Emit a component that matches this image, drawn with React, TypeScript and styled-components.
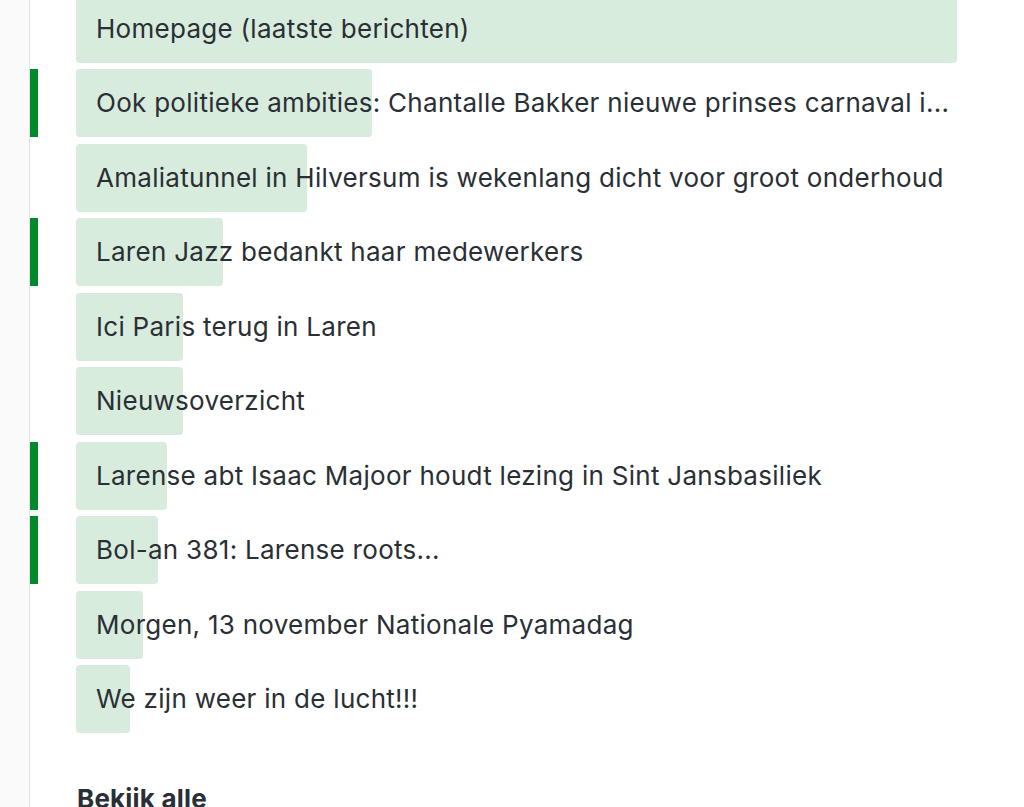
import React from "react";
import styled, { createGlobalStyle } from "styled-components";

const GlobalStyle = createGlobalStyle`
  html, body {
    margin: 0;
    padding: 0;
    background: #ffffff;
    font-family: Inter, "Noto Sans", "Liberation Sans", sans-serif;
    color: #2a2f35;
    overflow: hidden;
  }
`;

const Page = styled.div`
  display: flex;
  min-height: 807px;
`;

const Sidebar = styled.aside`
  width: 29px;
  flex: none;
  background: #fafafa;
  border-right: 1px solid #e2e2e2;
`;

const Main = styled.main`
  flex: 1;
  margin-top: -5px;
`;

const List = styled.ul`
  list-style: none;
  margin: 0;
  padding: 0;
  display: flex;
  flex-direction: column;
  gap: 6.45px;
`;

const Row = styled.li`
  display: grid;
  grid-template-columns: 8px 881px;
  column-gap: 38px;
  height: 68px;
`;

const Marker = styled.span<{ $on: boolean }>`
  background: ${(p) => (p.$on ? "#008a2a" : "transparent")};
`;

const Item = styled.a`
  position: relative;
  display: flex;
  align-items: center;
  padding: 0 2px 0 20px;
  text-decoration: none;
  color: inherit;
  min-width: 0;
`;

const Fill = styled.span`
  position: absolute;
  left: 0;
  top: 0;
  bottom: 0;
  background: #d8ecdd;
  border-radius: 4px;
`;

const Title = styled.span`
  position: relative;
  font-size: 26px;
  line-height: 32px;
  letter-spacing: 0.28px;
  white-space: nowrap;
  overflow: hidden;
  text-overflow: ellipsis;
`;

const More = styled.a`
  display: block;
  margin: 50px 0 0 47px;
  font-size: 26px;
  line-height: 32px;
  letter-spacing: 0.2px;
  font-weight: 700;
  color: #2a2f35;
  text-decoration: none;
`;

const items = [
  { title: "Homepage (laatste berichten)", width: 881, marked: false },
  {
    title: "Ook politieke ambities: Chantalle Bakker nieuwe prinses carnaval i...",
    width: 296,
    marked: true,
  },
  { title: "Amaliatunnel in Hilversum is wekenlang dicht voor groot onderhoud", width: 231, marked: false },
  { title: "Laren Jazz bedankt haar medewerkers", width: 147, marked: true },
  { title: "Ici Paris terug in Laren", width: 107, marked: false },
  { title: "Nieuwsoverzicht", width: 107, marked: false },
  { title: "Larense abt Isaac Majoor houdt lezing in Sint Jansbasiliek", width: 91, marked: true },
  { title: "Bol-an 381: Larense roots...", width: 82, marked: true },
  { title: "Morgen, 13 november Nationale Pyamadag", width: 67, marked: false },
  { title: "We zijn weer in de lucht!!!", width: 54, marked: false },
];

export default function App() {
  return (
    <>
      <GlobalStyle />
      <Page>
        <Sidebar />
        <Main>
          <List>
            {items.map((item) => (
              <Row key={item.title}>
                <Marker $on={item.marked} />
                <Item href="#">
                  <Fill style={{ width: item.width }} />
                  <Title>{item.title}</Title>
                </Item>
              </Row>
            ))}
          </List>
          <More href="#">Bekijk alle</More>
        </Main>
      </Page>
    </>
  );
}
